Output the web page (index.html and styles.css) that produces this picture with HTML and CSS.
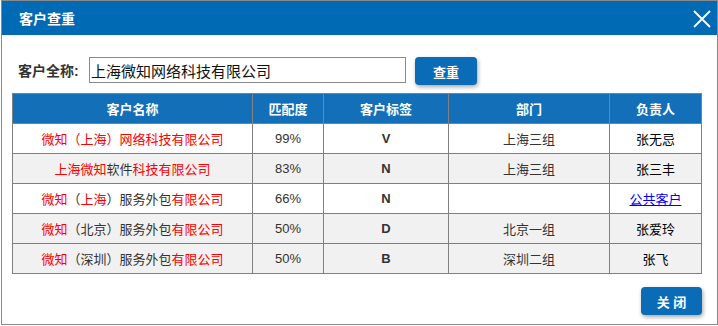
FILE: index.html
```html
<!DOCTYPE html>
<html lang="zh-CN">
<head>
    <meta charset="UTF-8">
    <title>客户查重</title>
    <link rel="stylesheet" href="styles.css">
</head>
<body>
    <div class="dialog">
        <div class="dialog-head">
            <span class="dialog-title">客户查重</span>
            <svg class="dialog-close" width="20" height="20" viewBox="0 0 20 20">
                <path d="M2 2 L18 18 M18 2 L2 18" stroke="#fff" stroke-width="1.8" fill="none"/>
            </svg>
        </div>

        <div class="search">
            <label class="search-label">客户全称:</label>
            <input class="search-input" type="text" value="上海微知网络科技有限公司">
            <button class="btn btn-search">查重</button>
        </div>

        <table class="result">
            <colgroup>
                <col class="c-name">
                <col class="c-match">
                <col class="c-tag">
                <col class="c-dept">
                <col class="c-owner">
            </colgroup>
            <thead>
                <tr>
                    <th>客户名称</th>
                    <th>匹配度</th>
                    <th>客户标签</th>
                    <th>部门</th>
                    <th>负责人</th>
                </tr>
            </thead>
            <tbody>
                <tr>
                    <td><em>微知（上海）网络科技有限公司</em></td>
                    <td>99%</td>
                    <td class="tag">V</td>
                    <td>上海三组</td>
                    <td class="owner">张无忌</td>
                </tr>
                <tr class="alt">
                    <td><em>上海微知</em>软件<em>科技有限公司</em></td>
                    <td>83%</td>
                    <td class="tag">N</td>
                    <td>上海三组</td>
                    <td class="owner">张三丰</td>
                </tr>
                <tr>
                    <td><em>微知</em>（<em>上海</em>）服务外包<em>有限公司</em></td>
                    <td>66%</td>
                    <td class="tag">N</td>
                    <td></td>
                    <td class="owner"><a href="#">公共客户</a></td>
                </tr>
                <tr class="alt">
                    <td><em>微知</em>（北京）服务外包<em>有限公司</em></td>
                    <td>50%</td>
                    <td class="tag">D</td>
                    <td>北京一组</td>
                    <td class="owner">张爱玲</td>
                </tr>
                <tr class="alt">
                    <td><em>微知</em>（深圳）服务外包<em>有限公司</em></td>
                    <td>50%</td>
                    <td class="tag">B</td>
                    <td>深圳二组</td>
                    <td class="owner">张飞</td>
                </tr>
            </tbody>
        </table>

        <div class="dialog-foot">
            <button class="btn btn-close">关 闭</button>
        </div>
    </div>
</body>
</html>
```

FILE: styles.css
```css
* {
    margin: 0;
    padding: 0;
    box-sizing: border-box;
}

body {
    font-family: "Liberation Sans", "Noto Sans CJK SC", sans-serif;
    background: #fff;
    color: #333;
}

.dialog {
    width: 717px;
    height: 325px;
    margin-left: 1px;
    border: 1px solid #8a8a8a;
    background: #fff;
}

/* Title bar */
.dialog-head {
    height: 34px;
    margin-top: 0;
    background: #016ab5;
    display: flex;
    align-items: center;
    justify-content: space-between;
    padding: 0 5px 0 17px;
}

.dialog-title {
    color: #fff;
    font-size: 14px;
    font-weight: bold;
}

.dialog-close {
    margin-top: 1px;
}

/* Search row */
.search {
    display: flex;
    align-items: flex-start;
    margin-top: 22px;
    padding-left: 16px;
}

.search-label {
    width: 71px;
    line-height: 28px;
    font-size: 14px;
    font-weight: bold;
    color: #333;
}

.search-input {
    width: 317px;
    height: 26px;
    border: 1px solid #8a8a8a;
    padding-left: 1px;
    font-family: "Liberation Sans", "Noto Sans CJK SC", sans-serif;
    font-size: 15px;
    color: #111;
    outline: none;
}

.btn {
    background: #0a6cb7;
    color: #fff;
    border: none;
    border-radius: 4px;
    font-family: "Liberation Sans", "Noto Sans CJK SC", sans-serif;
    font-size: 13px;
    font-weight: bold;
    box-shadow: 1px 2px 4px rgba(0, 0, 0, 0.35);
}

.btn-search {
    width: 62px;
    height: 28px;
    margin-left: 9px;
}

/* Result table */
.result {
    width: 689px;
    margin: 8px 0 0 10px;
    border-collapse: collapse;
    table-layout: fixed;
    font-size: 13px;
}

.c-name { width: 240px; }
.c-match { width: 71px; }
.c-tag { width: 125px; }
.c-dept { width: 161px; }
.c-owner { width: 92px; }

.result th,
.result td {
    border: 1px solid #808080;
    height: 30px;
    text-align: center;
    white-space: nowrap;
}

.result th {
    background: #126fb8;
    color: #fff;
    font-weight: bold;
}

.result td {
    color: #333;
}

.result tr.alt td {
    background: #f1f1f1;
}

.result em {
    font-style: normal;
    color: #f00;
}

.result .tag {
    font-weight: bold;
}

.result .owner {
    color: #000;
}

.result a {
    color: #00f;
}

/* Footer */
.dialog-foot {
    display: flex;
    justify-content: flex-end;
    padding: 13px 15px 0 0;
}

.btn-close {
    width: 61px;
    height: 28px;
}
```
